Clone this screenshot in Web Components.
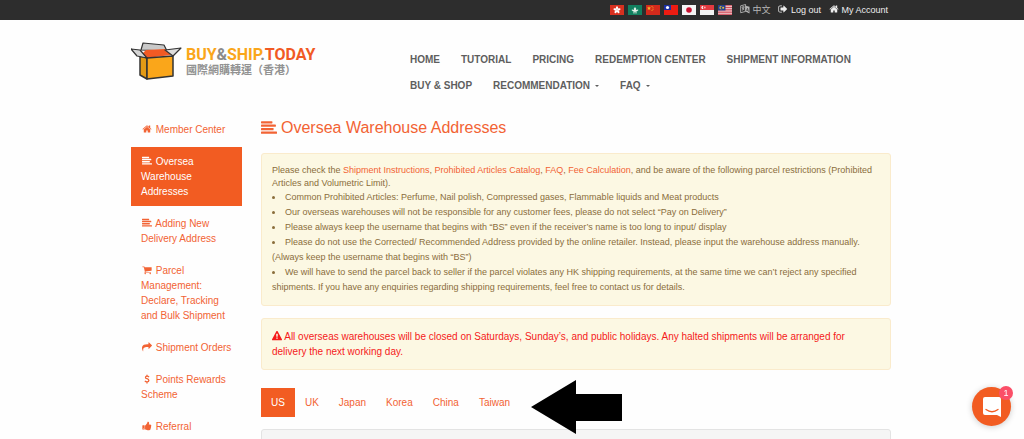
<!DOCTYPE html>
<html lang="en">
<head>
<meta charset="utf-8">
<meta name="viewport" content="width=device-width, initial-scale=1">
<title>Oversea Warehouse Addresses</title>
<style>
html{scrollbar-width:none}
body{margin:0;background:#fefefe;font-family:"Liberation Sans","Noto Sans CJK TC",sans-serif;font-size:10px;line-height:15px;--accent:#f26334;--fill:#f25c22}
</style>
</head>
<body>
<ship-app></ship-app>
<script>
const FA = {
home:'<path d="M1472 992v480q0 26-19 45t-45 19h-384v-384h-256v384h-384q-26 0-45-19t-19-45v-480q0-1 .5-3t.5-3l575-474 575 474q1 2 1 6zm223-69l-62 74q-8 9-21 11h-3q-13 0-21-7l-692-577-692 577q-12 8-24 7-13-2-21-11l-62-74q-8-10-7-23.5t11-21.5l719-599q32-26 76-26t76 26l244 204v-195q0-14 9-23t23-9h192q14 0 23 9t9 23v408l219 182q10 8 11 21.5t-7 23.5z"/>',
align:'<rect y="128" width="1280" height="256" rx="64"/><rect y="512" width="1664" height="256" rx="64"/><rect y="896" width="1408" height="256" rx="64"/><rect y="1280" width="1792" height="256" rx="64"/>',
cart:'<path d="M704 1536q0 52-38 90t-90 38-90-38-38-90 38-90 90-38 90 38 38 90zm896 0q0 52-38 90t-90 38-90-38-38-90 38-90 90-38 90 38 38 90zm128-1088v512q0 24-16.5 42.5t-40.5 21.5l-1044 122q13 60 13 70 0 16-24 64h920q26 0 45 19t19 45-19 45-45 19h-1024q-26 0-45-19t-19-45q0-11 8-31.5t16-36 21.5-40 15.5-29.5l-177-823h-204q-26 0-45-19t-19-45 19-45 45-19h256q16 0 28.5 6.5t19.5 15.5 13 24.5 8 26 5.5 29.5 4.5 26h1201q26 0 45 19t19 45z"/>',
share:'<path d="M1792 640q0 26-19 45l-512 512q-19 19-45 19t-45-19-19-45v-256h-224q-98 0-175.5 6t-154 21.5-133 42.5-105.5 69.5-80 101-48.5 138.5-17.5 181q0 55 5 123 0 6 2.5 23.5t2.5 26.5q0 15-8.5 25t-23.5 10q-16 0-28-17-7-9-13-22t-13.5-30-10.5-24q-127-285-127-451 0-199 53-333 162-403 875-403h224v-256q0-26 19-45t45-19 45 19l512 512q19 19 19 45z"/>',
dollar:'<path d="M1270 560Q1120 400 900 400Q620 400 620 610Q620 780 900 850Q1230 930 1230 1170Q1230 1400 900 1400Q660 1400 510 1230M896 120V400M896 1400V1680" fill="none" stroke="currentColor" stroke-width="230"/>',
thumb:'<path d="M320 1344q0-26-19-45t-45-19q-27 0-45.5 19t-18.5 45q0 27 18.5 45.5t45.5 18.5q26 0 45-18.5t19-45.5zm160-512v640q0 26-19 45t-45 19h-288q-26 0-45-19t-19-45v-640q0-26 19-45t45-19h288q26 0 45 19t19 45zm1184 0q0 86-55 149 15 44 15 76 3 76-43 137 17 56 0 117-15 57-54 94 9 112-49 181-64 76-197 78h-129q-66 0-144-15.5t-121.5-29-120.5-39.5q-123-43-158-44-26-1-45-19.5t-19-44.5v-641q0-25 18-43.5t43-20.5q24-2 76-59t101-121q68-87 101-120 18-18 31-48t17.5-48.5 13.5-60.5q7-39 12.5-61t19.5-52 34-50q19-19 45-19 46 0 82.5 10.5t60 26 40 40.5 24 45 12 50 5 45 .5 39q0 38-9.5 76t-19 60-27.5 56q-3 6-10 18t-11 22-8 24h277q78 0 135 57t57 135z"/>',
warning:'<path d="M1024 1375v-190q0-14-9.5-23.5t-22.5-9.5h-192q-13 0-22.5 9.5t-9.5 23.5v190q0 14 9.5 23.5t22.5 9.5h192q13 0 22.5-9.5t9.5-23.5zm-2-374l18-459q0-12-10-19-13-11-24-11h-220q-11 0-24 11-10 7-10 21l17 457q0 10 10 16.5t24 6.5h185q14 0 23.5-6.5t10.5-16.5zm-14-934l768 1408q35 63-2 126-17 29-46.5 46t-63.5 17h-1536q-34 0-63.5-17t-46.5-46q-37-63-2-126l768-1408q17-31 47-49t65-18 65 18 47 49z"/>',
signout:'<path d="M704 1440q0 4 1 20t.5 26.5-3 23.5-10 19.5-20.5 6.5h-320q-119 0-203.5-84.5t-84.5-203.5v-704q0-119 84.5-203.5t203.5-84.5h320q13 0 22.5 9.5t9.5 22.5q0 4 1 20t.5 26.5-3 23.5-10 19.5-20.5 6.5h-320q-66 0-113 47t-47 113v704q0 66 47 113t113 47h312l11.5 1 11.5 3 8 5.5 7 9 2 13.5zm928-544q0 26-19 45l-544 544q-19 19-45 19t-45-19-19-45v-288h-448q-26 0-45-19t-19-45v-384q0-26 19-45t45-19h448v-288q0-26 19-45t45-19 45 19l544 544q19 19 19 45z"/>',
language:'<path d="M120 330L1000 90V1330L120 1560Z" fill="none" stroke="currentColor" stroke-width="160"/><path d="M1000 300L1700 500V1700L1000 1330Z"/><path d="M300 620L800 500M560 380V560M350 1150Q700 950 730 560M380 750Q550 950 780 1050" fill="none" stroke="currentColor" stroke-width="160"/><path d="M1180 1250L1340 760L1530 1400M1230 1090L1460 1180" fill="none" stroke="#2d2d2d" stroke-width="110"/>'
};
const FLAG = {
hk:['Hong Kong','<path fill="#d8301f" d="M0 0h14v10H0z"/><g fill="#fff"><ellipse cx="7" cy="3" rx="1.1" ry="1.7"/><ellipse cx="7" cy="3" rx="1.1" ry="1.7" transform="rotate(72 7 5)"/><ellipse cx="7" cy="3" rx="1.1" ry="1.7" transform="rotate(144 7 5)"/><ellipse cx="7" cy="3" rx="1.1" ry="1.7" transform="rotate(216 7 5)"/><ellipse cx="7" cy="3" rx="1.1" ry="1.7" transform="rotate(288 7 5)"/></g>'],
mo:['Macau','<path fill="#12805f" d="M0 0h14v10H0z"/><path fill="#e6f2ea" d="M7 2Q9 4 8 5Q10 4 10.500 5Q9 7 7 7Q5 7 3.500 5Q4 4 6 5Q5 4 7 2M5 7.500h4v.7H5z"/>'],
cn:['China','<path fill="#d42a1c" d="M0 0h14v10H0z"/><path fill="#f5b52a" d="M3 1.200l.6 1.300 1.400.1-1 1 .3 1.400L3 4.300 1.700 5 2 3.600l-1-1 1.400-.1z"/><g fill="#f5b52a"><circle cx="6" cy="1.500" r=".5"/><circle cx="7" cy="2.800" r=".5"/><circle cx="7" cy="4.200" r=".5"/><circle cx="6" cy="5.400" r=".5"/></g>'],
tw:['Taiwan','<path fill="#ed1c12" d="M0 0h14v10H0z"/><path fill="#1a2fa0" d="M0 0h7v5H0z"/><circle cx="3.500" cy="2.500" r="1.600" fill="#fff"/>'],
jp:['Japan','<path fill="#f5f5f5" d="M0 0h14v10H0z"/><circle cx="7" cy="5" r="2.800" fill="#c8102e"/>'],
sg:['Singapore','<path fill="#f2f2f2" d="M0 0h14v10H0z"/><path fill="#e33a40" d="M0 0h14v5H0z"/><path d="M3.500 1a1.600 1.600 0 1 0 0 3a2 2 0 0 1 0-3" fill="#fff"/><circle cx="4.800" cy="2.500" r=".9" fill="#f6b5b5"/>'],
my:['Malaysia','<path fill="#f0dada" d="M0 0h14v10H0z"/><path stroke="#cf4050" stroke-width=".9" d="M0 .7h14M0 2.500h14M0 4.300h14M0 6h14M0 7.700h14M0 9.400h14"/><path fill="#23408f" d="M0 0h7.500v5.500H0z"/><circle cx="3" cy="2.700" r="1.600" fill="#e5c23a"/><circle cx="3.700" cy="2.700" r="1.200" fill="#23408f"/><circle cx="5.200" cy="2.700" r="1" fill="#e5c23a"/>']
};
const define = (name, html) => customElements.define(name, class extends HTMLElement {
  constructor(){ super(); this.attachShadow({mode:'open'}).innerHTML = html; }
});

customElements.define('fa-icon', class extends HTMLElement {
  connectedCallback(){
    this.attachShadow({mode:'open'}).innerHTML = `<style>:host{display:inline-block;width:10px;height:10px;vertical-align:-1px}svg{display:block;width:100%;height:100%;overflow:visible}</style><svg viewBox="0 0 1792 1792" fill="currentColor" aria-hidden="true">${FA[this.getAttribute('name')]}</svg>`;
  }
});
customElements.define('country-flag', class extends HTMLElement {
  connectedCallback(){
    const [label, art] = FLAG[this.getAttribute('code')];
    this.attachShadow({mode:'open'}).innerHTML = `<style>:host{display:block}a,svg{display:block}svg{width:14px;height:10px}</style><a href="#" aria-label="${label}"><svg viewBox="0 0 14 10">${art}</svg></a>`;
  }
});

define('top-bar', `<style>
:host{display:block;background:#2d2d2d;color:#eee;font-size:9px;line-height:20px}
.row{max-width:760px;margin:0 auto;box-sizing:border-box;padding-right:4px;display:flex;justify-content:flex-end;align-items:center;gap:8px;height:20px}
.flags{display:flex;gap:4px}
a{color:inherit;text-decoration:none;white-space:nowrap}
.lang{color:#b5b5b5}
</style><div class="row"><div class="flags">${Object.keys(FLAG).map(c=>`<country-flag code="${c}"></country-flag>`).join('')}</div>
<a class="lang" href="#"><fa-icon name="language"></fa-icon> 中文</a><a href="#"><fa-icon name="signout"></fa-icon> Log out</a><a href="#"><fa-icon name="home"></fa-icon> My Account</a></div>`);

define('brand-logo', `<style>
:host{display:block}
a{display:flex;gap:4px;text-decoration:none;align-items:flex-start}
svg{width:51px;height:39px;flex:none}
.name{font:bold 16px/17px Roboto,sans-serif;color:#faa61a;white-space:nowrap;padding-top:5px}
.name i{font-style:normal;color:#8b8b8b}.name b{font-weight:inherit;color:#f15a24}
.sub{font:bold 11px/12px "Noto Sans CJK TC",sans-serif;color:#929292;white-space:nowrap}
</style><a href="#"><svg viewBox="0 0 51 39" stroke-linejoin="round" stroke="#333">
<path d="M10 9L12 2L33 4L36 10Z" fill="#c9c9c9" stroke-width="1.200"/>
<path d="M9 15L15 9L34 8L40 14L16 17Z" fill="#f15a24" stroke="none"/>
<path d="M9 15V34L16 38V17Z" fill="#e39a15" stroke-width="1.500"/>
<path d="M16 17L42 15V35L16 38Z" fill="#faa61a" stroke-width="1.500"/>
<path d="M0 8L9 9L16 17L6 15Z" fill="#d5d5d5" stroke-width="1.200"/>
<path d="M34 9L50 7L42 15Z" fill="#ddd" stroke-width="1.200"/>
</svg><div><div class="name">BUY<i>&amp;</i>SHIP<i>.</i><b>TODAY</b></div><div class="sub">國際網購轉運（香港）</div></div></a>`);

define('main-nav', `<style>
:host{display:block}
nav{display:flex;flex-wrap:wrap;column-gap:21px;font-weight:bold;line-height:26px}
a{color:#5e5e5e;text-decoration:none;white-space:nowrap;display:flex;align-items:center;gap:5px}
.menu::after{content:"";border:2px solid transparent;border-top-color:currentColor;border-bottom:0}
</style><nav><a href="#">HOME</a><a href="#">TUTORIAL</a><a href="#">PRICING</a><a href="#">REDEMPTION CENTER</a><a href="#">SHIPMENT INFORMATION</a><a href="#">BUY &amp; SHOP</a><a href="#" class="menu">RECOMMENDATION</a><a href="#" class="menu">FAQ</a></nav>`);

customElements.define('side-link', class extends HTMLElement {
  connectedCallback(){
    this.attachShadow({mode:'open'}).innerHTML = `<style>
:host{display:block}
a{display:block;padding:7px 6px 7px 10px;color:var(--accent);text-decoration:none}
:host([active]) a{background:var(--fill);color:#fff}
fa-icon{margin:0 1px}
</style><a href="#"><fa-icon name="${this.getAttribute('icon')}"></fa-icon> <slot></slot></a>`;
  }
});
define('side-menu', `<style>:host{display:block}nav{display:flex;flex-direction:column;gap:3px}</style><nav>
<side-link icon="home">Member Center</side-link><side-link icon="align" active>Oversea Warehouse Addresses</side-link><side-link icon="align">Adding New Delivery Address</side-link><side-link icon="cart">Parcel Management: Declare, Tracking and Bulk Shipment</side-link><side-link icon="share">Shipment Orders</side-link><side-link icon="dollar">Points Rewards Scheme</side-link><side-link icon="thumb">Referral</side-link></nav>`);

define('notice-box', `<style>:host{display:block;background:#fcf8e3;border:1px solid #faebcc;border-radius:3px;padding:10px;color:#8a6d3b}</style><slot></slot>`);

define('country-tabs', `<style>
:host{display:block;position:relative}
nav{display:flex}
a{padding:7px 10px;color:var(--accent);text-decoration:none}
a[aria-current]{background:var(--fill);color:#fff}
svg{position:absolute;left:270px;top:-8px;width:91px;height:54px}
</style><nav><a href="#" aria-current="page">US</a><a href="#">UK</a><a href="#">Japan</a><a href="#">Korea</a><a href="#">China</a><a href="#">Taiwan</a></nav><svg viewBox="0 0 91 54" aria-hidden="true"><path d="M0 27L45 0V14H91V41H45V54Z"/></svg>`);

define('chat-launcher', `<style>
:host{position:fixed;right:13px;bottom:13px;display:block}
button{display:flex;align-items:center;justify-content:center;width:39px;height:39px;padding:0;border:0;border-radius:50%;background:var(--fill);box-shadow:0 1px 6px #0003}
svg{width:20px;height:22px}
span{position:absolute;right:-2px;top:-1px;width:14px;height:14px;border-radius:50%;background:#fb4f68;color:#fff;font-size:9px;line-height:14px;text-align:center}
</style><button aria-label="Open chat"><svg viewBox="0 0 20 22"><path fill="#fff" d="M3 1h14q2 0 2 2v18l-4-2H3q-2 0-2-2V3q0-2 2-2"/><path d="M4 13.500Q10 18 16 13.500" fill="none" stroke="#f25c22" stroke-width="1.300" stroke-linecap="round"/></svg></button><span>1</span>`);

define('warehouse-page', `<style>
:host{display:block}
h1{margin:0;font-size:16px;line-height:20px;font-weight:normal;color:var(--accent);display:flex;align-items:center;gap:4px}
h1 fa-icon{width:16px;height:16px}
.rules{margin-top:15px;font-size:9px}
p{margin:0}
.rules p{line-height:13px}
ul{margin:0;padding:0;list-style-position:inside}
a{color:var(--accent);text-decoration:none}
.alert{margin-top:12px;color:#f51a1a}
country-tabs{margin-top:18px}
.panel{margin-top:12px;min-height:20px;background:#f5f5f5;border:1px solid #e3e3e3;border-radius:3px}
</style><h1><fa-icon name="align"></fa-icon>Oversea Warehouse Addresses</h1>
<notice-box class="rules"><p>Please check the <a href="#">Shipment Instructions</a>, <a href="#">Prohibited Articles Catalog</a>, <a href="#">FAQ</a>, <a href="#">Fee Calculation</a>, and be aware of the following parcel restrictions (Prohibited Articles and Volumetric Limit).</p>
<ul><li>Common Prohibited Articles: Perfume, Nail polish, Compressed gases, Flammable liquids and Meat products</li><li>Our overseas warehouses will not be responsible for any customer fees, please do not select “Pay on Delivery”</li><li>Please always keep the username that begins with “BS” even if the receiver’s name is too long to input/ display</li><li>Please do not use the Corrected/ Recommended Address provided by the online retailer. Instead, please input the warehouse address manually. (Always keep the username that begins with “BS”)</li><li>We will have to send the parcel back to seller if the parcel violates any HK shipping requirements, at the same time we can’t reject any specified shipments. If you have any enquiries regarding shipping requirements, feel free to contact us for details.</li></ul></notice-box>
<notice-box class="alert"><p><fa-icon name="warning"></fa-icon> All overseas warehouses will be closed on Saturdays, Sunday’s, and public holidays. Any halted shipments will be arranged for delivery the next working day.</p></notice-box>
<country-tabs></country-tabs><div class="panel"></div>`);

define('ship-app', `<style>
:host{display:block}
.wrap{max-width:760px;margin:0 auto;padding-right:2px}
header{display:grid;grid-template-columns:279px 1fr;padding-top:21px}
main-nav{padding-top:6px}
.body{display:grid;grid-template-columns:111px 1fr;column-gap:19px;padding-top:16px}
warehouse-page{padding-top:3px}
</style><top-bar></top-bar><div class="wrap"><header><brand-logo></brand-logo><main-nav></main-nav></header><div class="body"><side-menu></side-menu><warehouse-page></warehouse-page></div></div><chat-launcher></chat-launcher>`);
</script>
</body>
</html>
